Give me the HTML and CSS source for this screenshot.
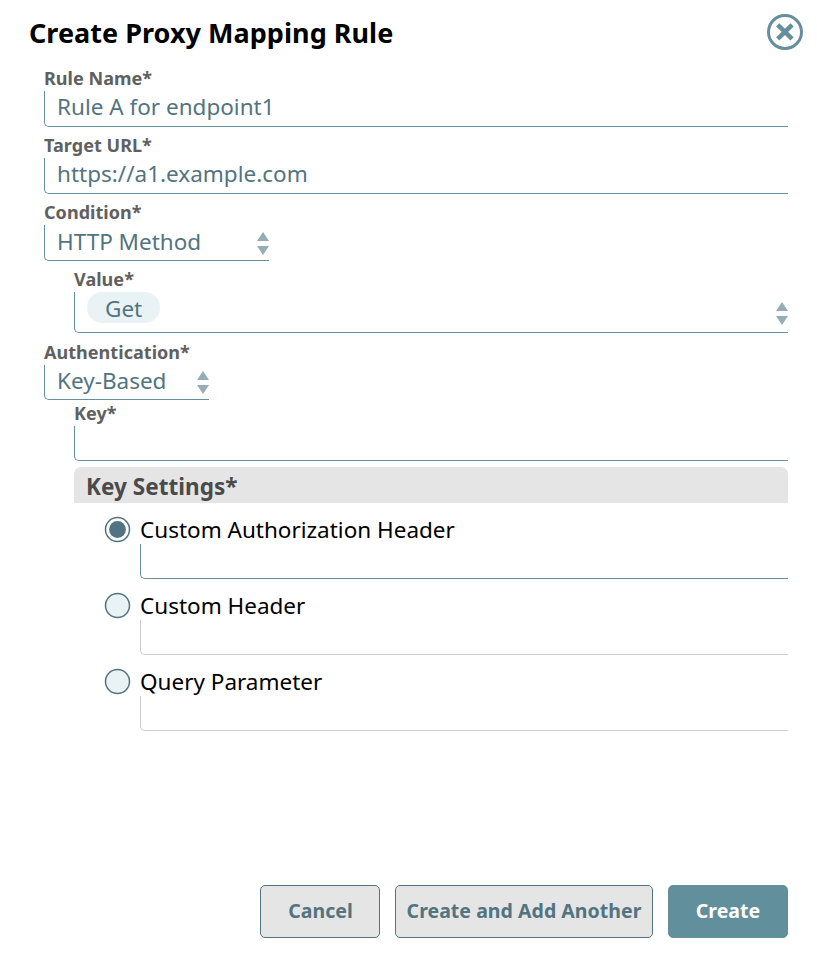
FILE: index.html
```html
<!DOCTYPE html>
<html lang="en">
<head>
<meta charset="utf-8">
<title>Create Proxy Mapping Rule</title>
<link rel="stylesheet" href="styles.css">
</head>
<body>
<main class="dialog">
  <header class="header">
    <h1 class="title">Create Proxy Mapping Rule</h1>
    <svg class="close" viewBox="0 0 36 36" role="img" aria-label="Close"><circle cx="18" cy="18" r="16.5"/><path d="M10.7 10.9 25.1 24.9M25.1 10.9 10.7 24.9"/></svg>
  </header>
  <form class="form">
    <div class="field">
      <div class="label">Rule Name*</div>
      <div class="control">Rule A for endpoint1</div>
    </div>
    <div class="field">
      <div class="label">Target URL*</div>
      <div class="control">https://a1.example.com</div>
    </div>
    <div class="field">
      <div class="label">Condition*</div>
      <div class="control select condition"><span>HTTP Method</span><svg class="arrows" viewBox="0 0 12 23"><path d="M6 0 12 9H0zM0 14H12L6 23z"/></svg></div>
    </div>
    <div class="field nested value">
      <div class="label">Value*</div>
      <div class="control select multi"><span class="chip">Get</span><svg class="arrows" viewBox="0 0 12 23"><path d="M6 0 12 9H0zM0 14H12L6 23z"/></svg></div>
    </div>
    <div class="field auth">
      <div class="label">Authentication*</div>
      <div class="control select short auth-select"><span>Key-Based</span><svg class="arrows" viewBox="0 0 12 23"><path d="M6 0 12 9H0zM0 14H12L6 23z"/></svg></div>
    </div>
    <div class="field nested key">
      <div class="label">Key*</div>
      <div class="control short"></div>
    </div>
    <section class="nested settings">
      <h2 class="settings-title">Key Settings*</h2>
      <div class="option">
        <svg class="radio checked" viewBox="0 0 27 27"><circle class="ring" cx="13.5" cy="13.5" r="12"/><circle class="dot" cx="13.5" cy="13.5" r="8.4"/></svg>
        <div class="option-body"><div class="option-label">Custom Authorization Header</div><div class="control short"></div></div>
      </div>
      <div class="option">
        <svg class="radio" viewBox="0 0 27 27"><circle class="ring" cx="13.5" cy="13.5" r="12"/></svg>
        <div class="option-body"><div class="option-label">Custom Header</div><div class="control short disabled"></div></div>
      </div>
      <div class="option">
        <svg class="radio" viewBox="0 0 27 27"><circle class="ring" cx="13.5" cy="13.5" r="12"/></svg>
        <div class="option-body"><div class="option-label">Query Parameter</div><div class="control short disabled"></div></div>
      </div>
    </section>
  </form>
  <footer class="footer">
    <button class="button cancel">Cancel</button>
    <button class="button another">Create and Add Another</button>
    <button class="button primary">Create</button>
  </footer>
</main>
</body>
</html>
```
FILE: styles.css
```css
* { box-sizing: border-box; }
body { margin: 0; background: #fff; font-family: "Noto Sans", sans-serif; color: #000; }
.dialog { height: 967px; display: flex; flex-direction: column; padding: 14px 29px 29px; }
.header { display: flex; justify-content: space-between; margin-right: -15px; height: 51px; }
.title { margin: 0; font-size: 27px; line-height: 38px; font-weight: 700; letter-spacing: 0.03px; }
.close { width: 36px; height: 36px; fill: none; stroke: #668f9e; stroke-width: 3; }
.close path { stroke-width: 4.6; }
.form { flex: 1; padding-left: 15px; }
.field { margin-bottom: 5px; }
.nested { margin-left: 30px; }
.label { height: 26px; line-height: 26px; font-size: 18px; font-weight: 700; letter-spacing: 0.04px; color: #606060; }
.control { height: 36px; padding-left: 12px; border-left: 1px solid #668f9e; border-bottom: 1px solid #668f9e; border-bottom-left-radius: 5px; font-size: 22.5px; line-height: 32px; color: #527480; }
.short { height: 35px; }
.disabled { border-color: #ccc; }
.select { display: flex; justify-content: space-between; }
.condition { width: 225px; line-height: 34px; }
.auth-select { width: 165px; }
.multi { height: 41px; }
.value { margin-bottom: 6px; }
.auth { margin-bottom: 0; }
.key { margin-bottom: 6px; }
.arrows { width: 12px; height: 23px; margin-top: 7px; fill: #95adb5; }
.auth-select .arrows { margin-top: 6px; }
.multi .arrows { margin-top: 10px; }
.chip { height: 31px; padding: 0 18px; border-radius: 15px; background: #e9f3f6; line-height: 34px; }
.settings-title { margin: 0 0 12px; padding-left: 12px; height: 36px; line-height: 39px; border-radius: 7px 7px 0 0; background: #e5e5e5; color: #4a4a4a; font-size: 22.5px; letter-spacing: 0.03px; }
.option { display: flex; gap: 9px; padding-left: 30px; margin-bottom: 12px; }
.option-body { flex: 1; }
.option-label { height: 29px; line-height: 30px; font-size: 22.5px; }
.radio { width: 27px; height: 27px; margin-top: 1px; }
.ring { fill: #e9f3f6; stroke: #527480; stroke-width: 1.5; }
.checked .ring { fill: #fff; }
.dot { fill: #527480; }
.footer { display: flex; justify-content: flex-end; gap: 15px; height: 53px; }
.button { width: 120px; height: 53px; padding: 0 0 2px; border: 1px solid #527480; border-radius: 5px; background: #e5e5e5; color: #527480; font: 700 19.5px "Noto Sans", sans-serif; letter-spacing: 0.03px; }
.cancel { padding-left: 1px; }
.another { width: 258px; }
.primary { background: #618f9c; border-color: #618f9c; color: #fff; }
```
